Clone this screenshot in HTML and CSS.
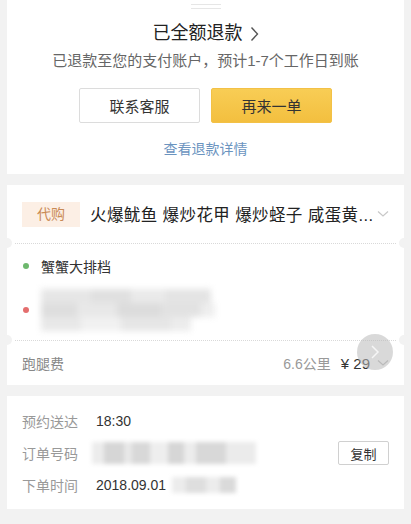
FILE: index.html
```html
<!DOCTYPE html>
<html lang="zh-CN">
<head>
<meta charset="utf-8">
<title>订单详情</title>
<link rel="stylesheet" href="styles.css">
</head>
<body>
<div class="page">
  <section class="card status">
    <div class="handle"><span></span><span></span></div>
    <div class="title">已全额退款
      <svg class="title-arrow" width="9" height="16" viewBox="0 0 9 16"><path d="M1.5 1.5 L7.5 8 L1.5 14.5" fill="none" stroke="#555" stroke-width="1.4"/></svg>
    </div>
    <div class="subtitle">已退款至您的支付账户，预计1-7个工作日到账</div>
    <div class="actions">
      <button class="btn btn-plain">联系客服</button>
      <button class="btn btn-yellow">再来一单</button>
    </div>
    <div class="link">查看退款详情</div>
  </section>

  <section class="card order">
    <div class="goods-row">
      <span class="tag">代购</span>
      <span class="goods">火爆鱿鱼 爆炒花甲 爆炒蛏子 咸蛋黄...</span>
      <svg class="chev-down" width="12" height="8" viewBox="0 0 12 8"><path d="M1 1.5 L6 6 L11 1.5" fill="none" stroke="#c8c8c8" stroke-width="1.2"/></svg>
    </div>
    <div class="sep"></div>
    <div class="route">
      <div class="route-row shop">
        <span class="dot green"></span>
        <span class="shop-name">蟹蟹大排档</span>
      </div>
      <div class="route-row addr">
        <span class="dot red"></span>
        <div class="mosaic addr-mosaic">
          <div class="mrow">
            <i style="width:50px;background:#e6e6e6"></i><i style="width:40px;background:#e0e0e0"></i><i style="width:34px;background:#eaeaea"></i><i style="width:46px;background:#e4e4e4"></i>
          </div>
          <div class="mrow">
            <i style="width:36px;background:#dedede"></i><i style="width:40px;background:#e8e8e8"></i><i style="width:44px;background:#dcdcdc"></i><i style="width:40px;background:#e2e2e2"></i><i style="width:14px;background:#eeeeee"></i>
          </div>
          <div class="mrow">
            <i style="width:40px;background:#e8e8e8"></i><i style="width:40px;background:#f1f1f1"></i><i style="width:50px;background:#e6e6e6"></i><i style="width:20px;background:#ececec"></i>
          </div>
        </div>
      </div>
    </div>
    <div class="sep"></div>
    <div class="fee-row">
      <span class="fee-label">跑腿费</span>
      <span class="fee-dist">6.6公里</span>
      <span class="fee-price">¥ 29</span>
      <svg class="chev-down fee-chev" width="12" height="8" viewBox="0 0 12 8"><path d="M1 1.5 L6 6 L11 1.5" fill="none" stroke="#bbb" stroke-width="1.2"/></svg>
      <div class="float-btn">
        <svg width="10" height="16" viewBox="0 0 10 16"><path d="M2 2 L8 8 L2 14" fill="none" stroke="#fff" stroke-width="1.5" opacity="0.75"/></svg>
      </div>
    </div>
  </section>

  <section class="card info">
    <div class="info-row">
      <span class="label">预约送达</span>
      <span class="value">18:30</span>
    </div>
    <div class="info-row">
      <span class="label">订单号码</span>
      <div class="mosaic num-mosaic">
        <i style="width:12px;background:#ececec"></i><i style="width:20px;background:#d6d6d6"></i><i style="width:8px;background:#e8e8e8"></i><i style="width:18px;background:#d8d8d8"></i><i style="width:18px;background:#eeeeee"></i><i style="width:16px;background:#d6d6d6"></i><i style="width:12px;background:#ececec"></i><i style="width:30px;background:#d8d8d8"></i><i style="width:30px;background:#ebebeb"></i>
      </div>
      <button class="copy">复制</button>
    </div>
    <div class="info-row">
      <span class="label">下单时间</span>
      <span class="value">2018.09.01</span>
      <div class="mosaic time-mosaic">
        <i style="width:14px;background:#ececec"></i><i style="width:20px;background:#dedede"></i><i style="width:14px;background:#ececec"></i><i style="width:16px;background:#dadada"></i>
      </div>
    </div>
  </section>
</div>
</body>
</html>
```

FILE: styles.css
```css
* { box-sizing: border-box; }
html, body { margin: 0; padding: 0; }
body {
  background: #f2f2f2;
  font-family: "Liberation Sans", "Noto Sans CJK SC", sans-serif;
  color: #333;
  width: 411px;
  height: 524px;
  overflow: hidden;
}
.page {
  padding: 0 7px;
  display: flex;
  flex-direction: column;
  gap: 11px;
}
.card {
  background: #fff;
  position: relative;
}

/* status card */
.status {
  height: 174px;
  display: flex;
  flex-direction: column;
  align-items: center;
}
.handle {
  display: flex;
  flex-direction: column;
  gap: 3px;
  margin-top: 4px;
  height: 8px;
}
.handle span {
  display: block;
  width: 30px;
  height: 1px;
  background: #e6e6e6;
}
.title {
  margin-top: 9px;
  font-size: 18px;
  line-height: 24px;
  color: #222;
  display: flex;
  align-items: center;
  gap: 7px;
}
.title-arrow { margin-top: 1px; }
.subtitle {
  margin-top: 6px;
  font-size: 15px;
  line-height: 20px;
  color: #666;
}
.actions {
  margin-top: 17px;
  display: flex;
  gap: 11px;
}
.btn {
  width: 121px;
  height: 35px;
  font-family: inherit;
  font-size: 15px;
  color: #333;
  border-radius: 2px;
  padding: 0;
}
.btn-plain {
  background: #fff;
  border: 1px solid #dcdcdc;
}
.btn-yellow {
  background: linear-gradient(#f8cd55, #f3bf3f);
  border: 1px solid #f3c146;
}
.link {
  margin-top: 16px;
  font-size: 14px;
  line-height: 20px;
  color: #6b94bf;
}

/* order card */
.order {
  height: 200px;
  display: flex;
  flex-direction: column;
}
.goods-row {
  height: 58px;
  display: flex;
  align-items: center;
  padding: 0 15px;
}
.tag {
  width: 58px;
  height: 25px;
  background: #fcefe5;
  color: #c98a55;
  font-size: 14px;
  line-height: 25px;
  text-align: center;
  flex: none;
}
.goods {
  margin-left: 10px;
  font-size: 16.5px;
  letter-spacing: 0.4px;
  color: #222;
  white-space: nowrap;
  flex: none;
}
.chev-down { flex: none; }
.goods-row .chev-down { margin-left: auto; }
.sep {
  height: 1px;
  margin: 0 8px;
  border-top: 1px dotted #d9d9d9;
  position: relative;
}
.sep::before, .sep::after {
  content: "";
  position: absolute;
  top: -6px;
  width: 10px;
  height: 10px;
  border-radius: 50%;
  background: #f2f2f2;
}
.sep::before { left: -13px; }
.sep::after { right: -13px; }
.route {
  height: 96px;
  display: flex;
  flex-direction: column;
}
.route-row {
  display: flex;
  align-items: center;
  padding-left: 16px;
}
.shop { height: 44px; }
.dot {
  width: 6px;
  height: 6px;
  border-radius: 50%;
  flex: none;
}
.green { background: #6db86d; }
.red { background: #e46e6e; }
.shop-name {
  margin-left: 12px;
  font-size: 14px;
  color: #333;
}
.addr {
  height: 44px;
  position: relative;
}
.mosaic {
  filter: blur(2px);
}
.mosaic i { display: block; height: 100%; flex: none; }
.addr-mosaic {
  margin-left: 12px;
  display: flex;
  flex-direction: column;
  filter: blur(3px);
}
.mrow { display: flex; height: 14px; }
.fee-row {
  flex: 1;
  display: flex;
  align-items: center;
  padding: 0 15px;
  position: relative;
  font-size: 14px;
}
.fee-label { color: #888; flex: 1; }
.fee-dist { color: #999; }
.fee-price { color: #333; margin-left: 10px; font-size: 15px; }
.fee-chev { margin-left: 7px; }
.float-btn {
  position: absolute;
  right: 11px;
  top: -7px;
  width: 36px;
  height: 36px;
  border-radius: 50%;
  background: rgba(185, 185, 185, 0.55);
  display: flex;
  align-items: center;
  justify-content: center;
}

/* info card */
.info {
  height: 113px;
  padding: 9px 15px 8px;
  display: flex;
  flex-direction: column;
}
.info-row {
  height: 32px;
  display: flex;
  align-items: center;
  font-size: 14px;
}
.label {
  color: #999;
  width: 74px;
  flex: none;
}
.value { color: #333; }
.num-mosaic {
  display: flex;
  height: 22px;
  margin-left: -4px;
  flex: none;
}
.time-mosaic {
  display: flex;
  height: 16px;
  margin-left: 6px;
}
.copy {
  margin-left: auto;
  width: 51px;
  height: 24px;
  background: #fff;
  border: 1px solid #d0d0d0;
  border-radius: 2px;
  font-family: inherit;
  font-size: 13px;
  color: #333;
  padding: 0;
}
```
